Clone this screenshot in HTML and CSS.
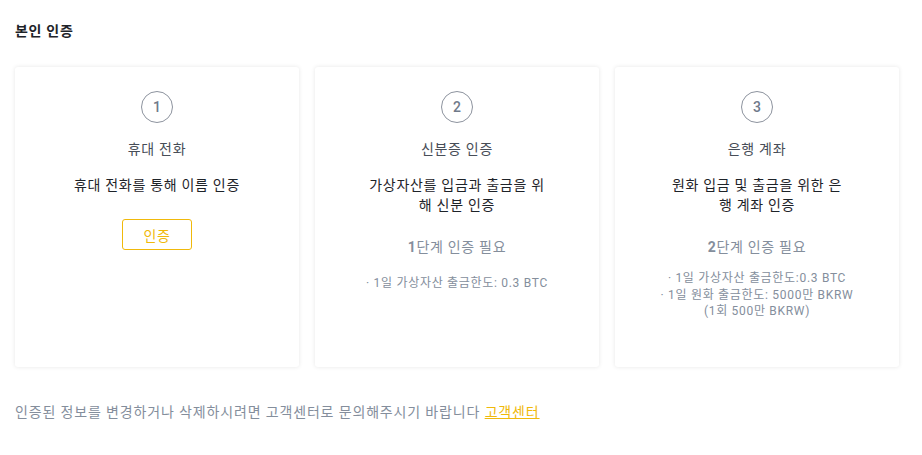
FILE: index.html
```html
<!DOCTYPE html>
<html lang="ko">
<head>
<meta charset="utf-8">
<title>본인 인증</title>
<link rel="stylesheet" href="styles.css">
</head>
<body>
<div class="page">
  <h1 class="page-title">본인 인증</h1>
  <div class="cards">
    <div class="card">
      <div class="step">1</div>
      <div class="card-title">휴대 전화</div>
      <div class="card-desc">휴대 전화를 통해 이름 인증</div>
      <button class="btn">인증</button>
    </div>
    <div class="card">
      <div class="step">2</div>
      <div class="card-title">신분증 인증</div>
      <div class="card-desc">가상자산를 입금과 출금을 위<br>해 신분 인증</div>
      <div class="req"><b>1</b>단계 인증 필요</div>
      <div class="limits limits-single">· 1일 가상자산 출금한도: 0.3 BTC</div>
    </div>
    <div class="card">
      <div class="step">3</div>
      <div class="card-title">은행 계좌</div>
      <div class="card-desc">원화 입금 및 출금을 위한 은<br>행 계좌 인증</div>
      <div class="req"><b>2</b>단계 인증 필요</div>
      <div class="limits">· 1일 가상자산 출금한도:0.3 BTC<br>· 1일 원화 출금한도: 5000만 BKRW<br>(1회 500만 BKRW)</div>
    </div>
  </div>
  <p class="note">인증된 정보를 변경하거나 삭제하시려면 고객센터로 문의해주시기 바랍니다 <a href="#" class="link">고객센터</a></p>
</div>
</body>
</html>
```
FILE: styles.css
```css
* { box-sizing: border-box; }
html, body { margin: 0; padding: 0; background: #fff; }
body {
  font-family: Roboto, "Noto Sans CJK KR", "Noto Sans", sans-serif;
  color: #1e2329;
  font-size: 14px;
  letter-spacing: 0.05em;
}
.page { padding: 21px 15px 0 15px; }
.page-title {
  margin: 0;
  font-size: 14px;
  font-weight: 700;
  line-height: 20px;
  color: #1e2329;
}
.cards {
  display: flex;
  gap: 16px;
  margin-top: 26px;
  width: 884px;
}
.card {
  flex: 0 0 284px;
  height: 300px;
  background: #fff;
  border-radius: 3px;
  box-shadow: 0 0 4px rgba(0, 0, 0, 0.1);
  padding: 24px 40px 0;
  display: flex;
  flex-direction: column;
  align-items: center;
  text-align: center;
}
.step {
  width: 32px;
  height: 32px;
  border: 1px solid #8d939e;
  border-radius: 50%;
  display: flex;
  align-items: center;
  justify-content: center;
  font-size: 14px;
  font-weight: 500;
  letter-spacing: 0;
  color: #707a8a;
}
.card-title {
  margin-top: 16px;
  line-height: 20px;
  font-size: 14px;
  color: #474d57;
}
.card-desc {
  margin-top: 16px;
  line-height: 20px;
  font-size: 14px;
  color: #1e2329;
  white-space: nowrap;
}
.btn {
  margin-top: 24px;
  width: 70px;
  height: 31px;
  border: 1px solid #f0b90b;
  border-radius: 3px;
  background: #fff;
  color: #f0b90b;
  font-family: inherit;
  font-size: 14px;
  letter-spacing: inherit;
  padding: 0;
}
.req {
  margin-top: 22px;
  line-height: 20px;
  font-size: 14px;
  color: #848e9c;
}
.req b { font-weight: 700; }
.limits {
  margin-top: 13px;
  font-size: 12px;
  line-height: 16.5px;
  color: #848e9c;
  white-space: nowrap;
}
.limits-single { margin-top: 18px; }
.note {
  margin: 35px 0 0;
  line-height: 20px;
  font-size: 14px;
  letter-spacing: 0.85px;
  color: #848e9c;
}
.link {
  color: #f0b90b;
  text-decoration: underline;
}
```
